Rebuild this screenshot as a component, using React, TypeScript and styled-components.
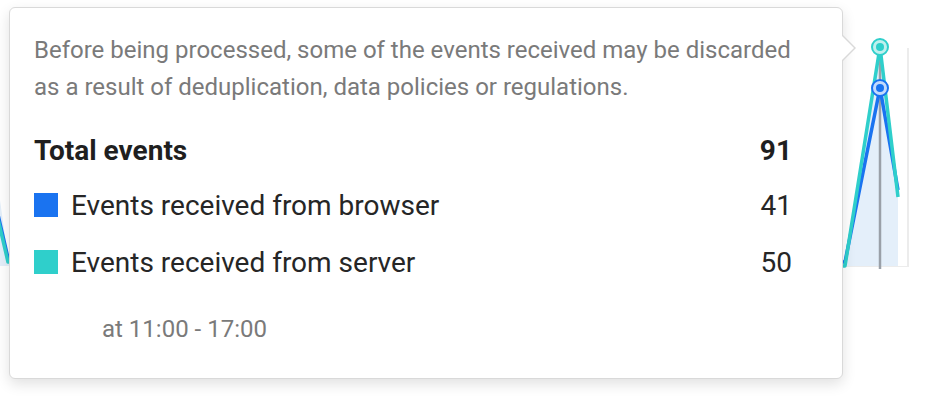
import React from 'react'
import styled, { createGlobalStyle } from 'styled-components'

const GlobalStyle = createGlobalStyle`
  html, body {
    margin: 0;
    padding: 0;
    background: #ffffff;
  }
  body {
    font-family: Roboto, "Liberation Sans", Arial, sans-serif;
    -webkit-font-smoothing: antialiased;
  }
`

const Stage = styled.div`
  position: relative;
  width: 952px;
  height: 404px;
  overflow: hidden;
  background: #ffffff;
`

const Chart = styled.svg`
  display: block;
  width: 952px;
  height: 404px;
`

const Tooltip = styled.div`
  position: absolute;
  left: 9px;
  top: 7px;
  width: 834px;
  height: 372px;
  box-sizing: border-box;
  padding: 24px 40px 0 24px;
  background: #ffffff;
  border: 1px solid #d9d9d9;
  border-radius: 6px;
  box-shadow: 0 5px 14px rgba(0, 0, 0, 0.12);

  &::before,
  &::after {
    content: '';
    position: absolute;
    top: 26px;
    width: 0;
    height: 0;
    border-style: solid;
  }
  &::before {
    right: -14px;
    border-width: 14px 0 14px 14px;
    border-color: transparent transparent transparent #d9d9d9;
  }
  &::after {
    right: -12px;
    top: 27px;
    border-width: 13px 0 13px 13px;
    border-color: transparent transparent transparent #ffffff;
  }
`

const Description = styled.p`
  margin: 0;
  max-width: 760px;
  font-size: 24px;
  line-height: 37px;
  color: #7a7a7a;
`

const Total = styled.div`
  display: flex;
  justify-content: space-between;
  align-items: center;
  margin-top: 26px;
  margin-right: 10px;
  height: 36px;
  font-size: 28px;
  font-weight: 700;
  color: #1f1f1f;
`

const Rows = styled.div`
  display: flex;
  flex-direction: column;
  gap: 21px;
  margin-top: 19px;
  margin-right: 10px;
`

const Row = styled.div`
  display: flex;
  align-items: center;
  height: 36px;
  font-size: 28px;
  color: #262626;
`

const Swatch = styled.span<{ $color: string }>`
  width: 24px;
  height: 24px;
  margin-right: 13px;
  background: ${p => p.$color};
  flex: none;
`

const Label = styled.span`
  flex: 1;
`

const Value = styled.span`
  text-align: right;
`

const Time = styled.div`
  margin-top: 31px;
  padding-left: 68px;
  font-size: 24px;
  line-height: 36px;
  color: #7a7a7a;
`

const series = [
  { label: 'Events received from browser', value: 41, color: '#1a73f0' },
  { label: 'Events received from server', value: 50, color: '#2fcfcb' },
]

const ChartBackdrop: React.FC = () => (
  <Chart viewBox="0 0 952 404">
    <line x1="908" y1="48" x2="908" y2="267" stroke="#e6e6e6" strokeWidth="1.5" />
    <line x1="843" y1="266.5" x2="908" y2="266.5" stroke="#ececec" strokeWidth="1" />
    <polygon points="0,200 8,258 845,262 880,47 898,195 898,266 0,266" fill="#e4effa" />
    <line x1="880" y1="48" x2="880" y2="269" stroke="#9aa0a8" strokeWidth="2.5" />
    <polyline points="-10,180 8,258 845,262 880,88 898,190" fill="none" stroke="#1a73f0" strokeWidth="3.5" strokeLinejoin="round" />
    <polyline points="-10,185 8,262 845,266 880,47 898,197" fill="none" stroke="#2fcfcb" strokeWidth="3.5" strokeLinejoin="round" />
    <circle cx="880" cy="47" r="8" fill="#bff0ee" stroke="#2fcfcb" strokeWidth="2" />
    <circle cx="880" cy="47" r="4" fill="#2fcfcb" />
    <circle cx="880" cy="88" r="8" fill="#c4dafc" stroke="#1a73f0" strokeWidth="2" />
    <circle cx="880" cy="88" r="4" fill="#1a73f0" />
  </Chart>
)

export default function App() {
  const total = series.reduce((sum, s) => sum + s.value, 0)
  return (
    <>
      <GlobalStyle />
      <Stage>
        <ChartBackdrop />
        <Tooltip>
          <Description>
            Before being processed, some of the events received may be discarded as a result of
            deduplication, data policies or regulations.
          </Description>
          <Total>
            <span>Total events</span>
            <span>{total}</span>
          </Total>
          <Rows>
            {series.map(s => (
              <Row key={s.label}>
                <Swatch $color={s.color} />
                <Label>{s.label}</Label>
                <Value>{s.value}</Value>
              </Row>
            ))}
          </Rows>
          <Time>at 11:00 - 17:00</Time>
        </Tooltip>
      </Stage>
    </>
  )
}
